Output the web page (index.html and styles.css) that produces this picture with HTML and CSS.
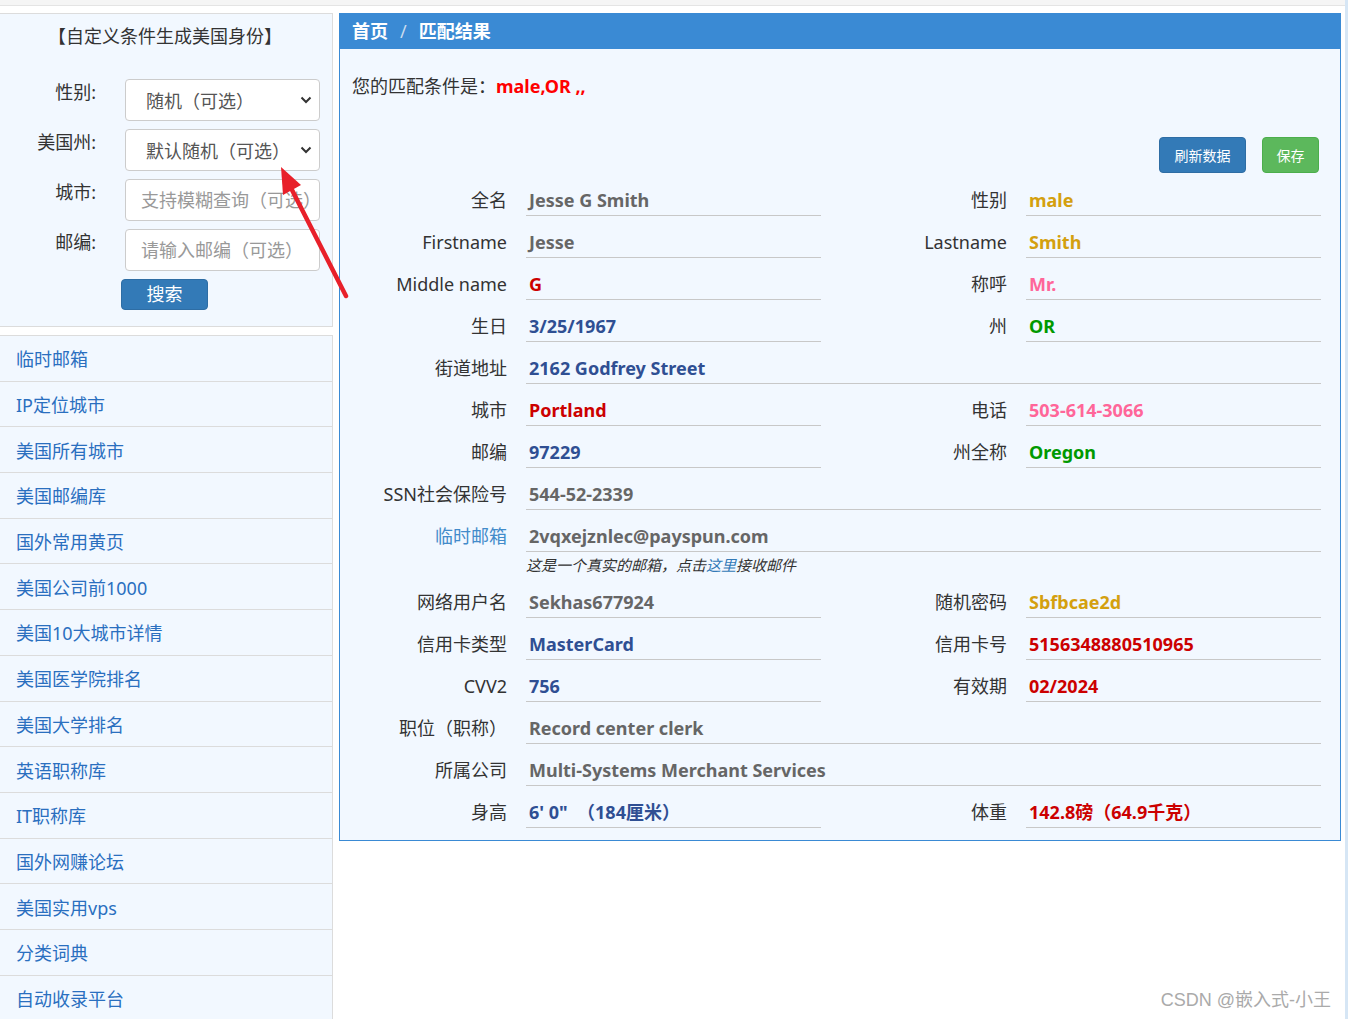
FILE: index.html
```html
<!DOCTYPE html>
<html lang="zh-CN">
<head>
<meta charset="utf-8">
<title>匹配结果</title>
<link rel="stylesheet" href="styles.css">
</head>
<body>
<div class="page">
  <div class="topstrip"></div>
  <div class="layout">
    <aside class="sidebar">
      <div class="formpanel">
        <div class="formtitle">【自定义条件生成美国身份】</div>
        <div class="formgrid">
          <label class="flabel">性别:</label>
          <div class="fselect"><span>随机（可选）</span><svg class="chev" width="12" height="8" viewBox="0 0 12 8"><path d="M1.5 1.5 L6 6 L10.5 1.5" fill="none" stroke="#333" stroke-width="2"/></svg></div>
          <label class="flabel">美国州:</label>
          <div class="fselect"><span>默认随机（可选）</span><svg class="chev" width="12" height="8" viewBox="0 0 12 8"><path d="M1.5 1.5 L6 6 L10.5 1.5" fill="none" stroke="#333" stroke-width="2"/></svg></div>
          <label class="flabel">城市:</label>
          <input class="finput" type="text" placeholder="支持模糊查询（可选）">
          <label class="flabel">邮编:</label>
          <input class="finput" type="text" placeholder="请输入邮编（可选）">
        </div>
        <button class="searchbtn">搜索</button>
      </div>
      <ul class="menu">
        <li><a>临时邮箱</a></li>
        <li><a>IP定位城市</a></li>
        <li><a>美国所有城市</a></li>
        <li><a>美国邮编库</a></li>
        <li><a>国外常用黄页</a></li>
        <li><a>美国公司前1000</a></li>
        <li><a>美国10大城市详情</a></li>
        <li><a>美国医学院排名</a></li>
        <li><a>美国大学排名</a></li>
        <li><a>英语职称库</a></li>
        <li><a>IT职称库</a></li>
        <li><a>国外网赚论坛</a></li>
        <li><a>美国实用vps</a></li>
        <li><a>分类词典</a></li>
        <li><a>自动收录平台</a></li>
      </ul>
    </aside>
    <main class="mainpanel">
      <div class="crumb"><span>首页</span><span class="sep">/</span><span>匹配结果</span></div>
      <p class="cond">您的匹配条件是：<b class="condval">male,OR ,,</b></p>
      <div class="actions">
        <button class="btn btn-blue">刷新数据</button>
        <button class="btn btn-green">保存</button>
      </div>
      <div class="fields">
        <div class="lbl">全名</div><div class="val gray">Jesse G Smith</div>
        <div class="lbl">性别</div><div class="val gold">male</div>

        <div class="lbl">Firstname</div><div class="val gray">Jesse</div>
        <div class="lbl">Lastname</div><div class="val gold">Smith</div>

        <div class="lbl">Middle name</div><div class="val red">G</div>
        <div class="lbl">称呼</div><div class="val pink">Mr.</div>

        <div class="lbl">生日</div><div class="val blue">3/25/1967</div>
        <div class="lbl">州</div><div class="val green">OR</div>

        <div class="lbl">街道地址</div><div class="val blue wide">2162 Godfrey Street</div>

        <div class="lbl">城市</div><div class="val red">Portland</div>
        <div class="lbl">电话</div><div class="val pink">503-614-3066</div>

        <div class="lbl">邮编</div><div class="val blue">97229</div>
        <div class="lbl">州全称</div><div class="val green">Oregon</div>

        <div class="lbl">SSN社会保险号</div><div class="val gray wide">544-52-2339</div>

        <div class="lbl lbl-link">临时邮箱</div><div class="val gray wide">2vqxejznlec@payspun.com</div>
        <div class="notepad"></div><div class="note wide">这是一个真实的邮箱，点击<a class="notelink">这里</a>接收邮件</div>

        <div class="lbl">网络用户名</div><div class="val gray">Sekhas677924</div>
        <div class="lbl">随机密码</div><div class="val gold">Sbfbcae2d</div>

        <div class="lbl">信用卡类型</div><div class="val blue">MasterCard</div>
        <div class="lbl">信用卡号</div><div class="val red">5156348880510965</div>

        <div class="lbl">CVV2</div><div class="val blue">756</div>
        <div class="lbl">有效期</div><div class="val red">02/2024</div>

        <div class="lbl">职位（职称）</div><div class="val gray wide">Record center clerk</div>

        <div class="lbl">所属公司</div><div class="val gray wide">Multi-Systems Merchant Services</div>

        <div class="lbl">身高</div><div class="val blue">6' 0"  （184厘米）</div>
        <div class="lbl">体重</div><div class="val red">142.8磅（64.9千克）</div>
      </div>
    </main>
  </div>
  <div class="watermark">CSDN @嵌入式-小王</div>
  <svg class="arrow" width="80" height="150" viewBox="270 160 80 150">
    <line x1="346" y1="296" x2="291" y2="188" stroke="#e8202a" stroke-width="4.5" stroke-linecap="round"/>
    <polygon points="281,167 301,185 283,195" fill="#e8202a"/>
  </svg>
</div>
</body>
</html>
```

FILE: styles.css
```css
* { box-sizing: border-box; }
html, body { margin: 0; padding: 0; background: #fff; }
body {
  font-family: "Noto Sans", "Noto Sans CJK SC", sans-serif;
  color: #333;
}
.page {
  position: relative;
  width: 1348px;
  height: 1019px;
  overflow: hidden;
  border-right: 3px solid #d6e6f5;
}
.topstrip {
  height: 6px;
  background: #f5f5f5;
  border-bottom: 1px solid #e4e4e4;
}
.layout {
  display: flex;
  align-items: flex-start;
  gap: 6px;
  padding-top: 7px;
}
.sidebar { width: 333px; flex: none; }
.formpanel {
  background: #f2f8ff;
  border: 1px solid #dcdcdc;
  border-left: none;
  height: 314px;
  padding-top: 9px;
}
.formtitle {
  text-align: center;
  font-size: 18px;
  line-height: 26px;
  color: #333;
  padding-right: 2px;
}
.formgrid {
  display: grid;
  grid-template-columns: 96px 195px;
  grid-auto-rows: 42px;
  column-gap: 29px;
  row-gap: 8px;
  margin-top: 30px;
}
.flabel {
  text-align: right;
  font-size: 18px;
  line-height: 26px;
  color: #333;
}
.fselect {
  display: flex;
  align-items: center;
  justify-content: space-between;
  background: #fff;
  border: 1px solid #ccc;
  border-radius: 4px;
  padding: 0 7px 0 20px;
  font-size: 18px;
  color: #555;
}
.chev { flex: none; }
.finput {
  background: #fff;
  border: 1px solid #ccc;
  border-radius: 4px;
  padding: 0 0 0 15px;
  font: inherit;
  font-size: 18px;
  color: #555;
  width: 195px;
  height: 42px;
}
.finput::placeholder { color: #999; }
.searchbtn {
  display: block;
  margin: 8px 0 0 121px;
  width: 87px;
  height: 31px;
  background: #337ab7;
  border: 1px solid #2e6da4;
  border-radius: 4px;
  color: #fff;
  font: inherit;
  font-size: 18px;
  line-height: 27px;
  padding: 0;
}
.menu {
  list-style: none;
  margin: 8px 0 0;
  padding: 0;
  background: #f2f8ff;
  border: 1px solid #dcdcdc;
  border-left: none;
}
.menu li {
  height: 45.7px;
  border-bottom: 1px solid #dcdcdc;
  padding-left: 16px;
  display: flex;
  align-items: center;
}
.menu li a {
  font-size: 18px;
  color: #2a6fbf;
}
.mainpanel {
  width: 1002px;
  flex: none;
  background: #f2f8ff;
  border: 1px solid #3a8ad4;
  padding-bottom: 12px;
}
.crumb {
  height: 35px;
  background: #3a8ad4;
  color: #fff;
  font-weight: bold;
  font-size: 18px;
  line-height: 35px;
  padding-left: 12px;
}
.crumb .sep {
  color: #c9dcee;
  font-weight: normal;
  margin: 0 12px;
}
.cond {
  margin: 0;
  padding: 24px 0 0 12px;
  font-size: 18px;
  line-height: 26px;
  color: #333;
}
.condval { color: #f00; font-weight: bold; }
.actions {
  display: flex;
  justify-content: flex-end;
  gap: 16px;
  padding-right: 21px;
  margin-top: 38px;
}
.btn {
  height: 36px;
  border-radius: 4px;
  color: #fff;
  font: inherit;
  font-size: 14px;
  padding: 0;
}
.btn-blue { width: 87px; background: #337ab7; border: 1px solid #2e6da4; }
.btn-green { width: 57px; background: #5cb85c; border: 1px solid #4cae4c; }
.fields {
  display: grid;
  grid-template-columns: 186px 295px 205px 295px;
  margin-top: 1px;
}
.lbl {
  text-align: right;
  padding: 13px 19px 0 0;
  font-size: 18px;
  line-height: 26px;
  color: #333;
  white-space: nowrap;
  height: 42px;
}
.lbl-link { color: #428bca; }
.val {
  height: 42px;
  padding: 13px 0 0 3px;
  border-bottom: 1px solid #c8c8c8;
  font-size: 18px;
  line-height: 26px;
  font-weight: bold;
  white-space: pre;
}
.wide { grid-column: span 3; }
.gray { color: #666; }
.gold { color: #d4a00f; }
.red { color: #cc0000; }
.pink { color: #ff6699; }
.green { color: #009900; }
.blue { color: #2f4f93; }
.note {
  height: 24px;
  padding-top: 1px;
  font-size: 15px;
  line-height: 24px;
  font-style: italic;
  color: #333;
}
.notelink { color: #337ab7; }
.watermark {
  position: absolute;
  right: 14px;
  bottom: 8px;
  font-family: "Liberation Sans", "Noto Sans CJK SC", sans-serif;
  font-size: 18px;
  color: #aaa;
}
.arrow {
  position: absolute;
  left: 270px;
  top: 160px;
}
```
